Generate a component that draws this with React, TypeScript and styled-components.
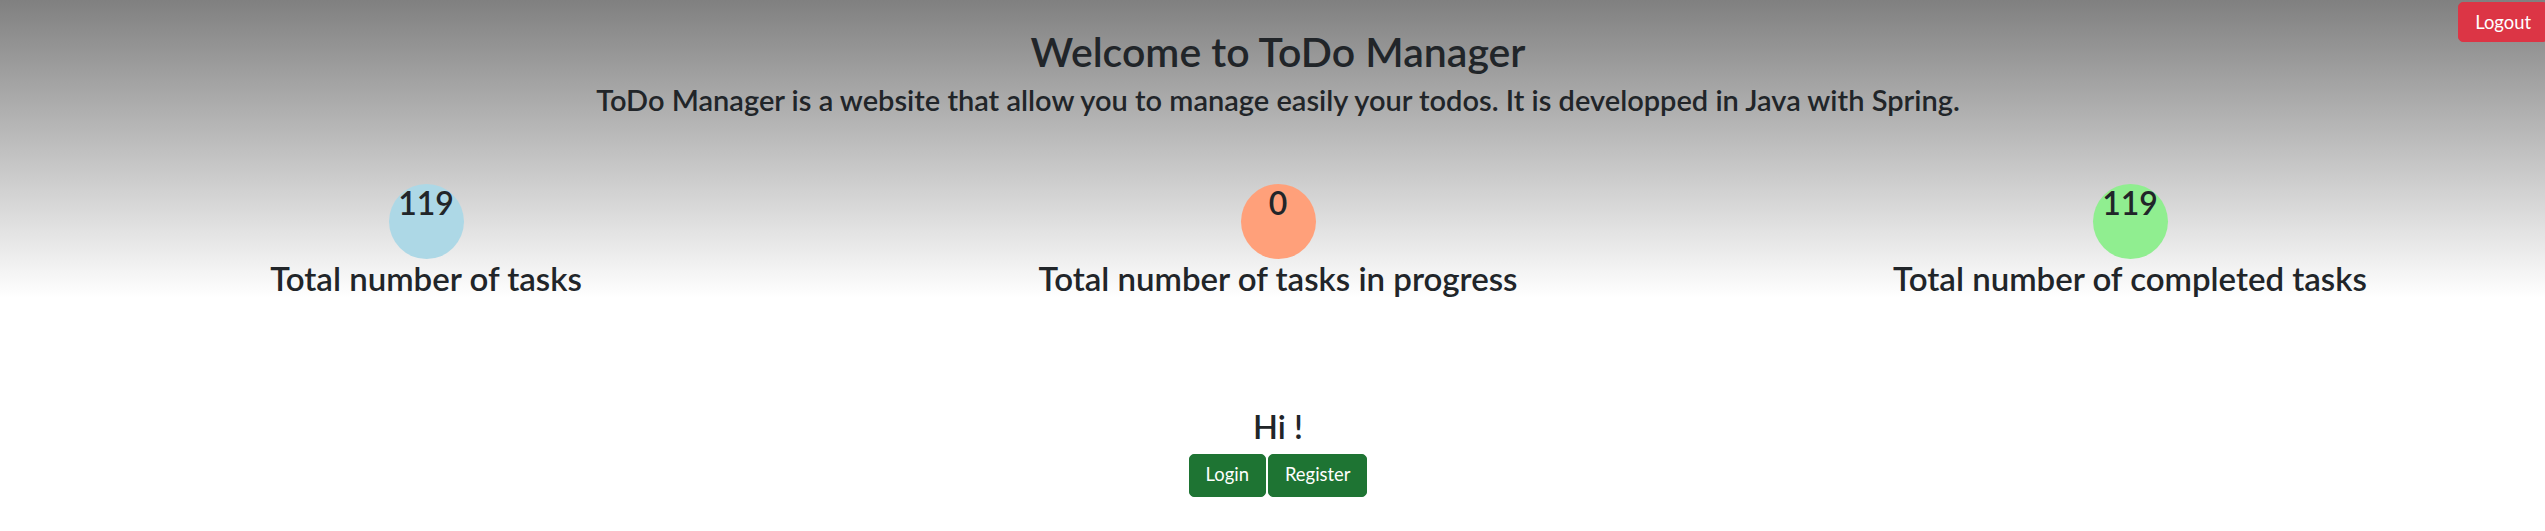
import React from "react";
import styled, { createGlobalStyle } from "styled-components";

const GlobalStyle = createGlobalStyle`
  html, body {
    margin: 0;
    padding: 0;
    overflow-x: hidden;
    background: #ffffff;
  }
  body {
    font-family: Lato, "Liberation Sans", sans-serif;
    color: #212529;
  }
`;

const Page = styled.div`
  position: relative;
  width: 2556px;
`;

const Hero = styled.header`
  background: linear-gradient(to bottom, #808080 0%, #ffffff 100%);
  padding-top: 27px;
  text-align: center;
`;

const Title = styled.h1`
  margin: 0;
  font-size: 41px;
  line-height: 1.2;
  font-weight: 600;
`;

const Subtitle = styled.h3`
  margin: 7px 0 0;
  font-size: 29px;
  line-height: 1.2;
  font-weight: 600;
`;

const LogoutButton = styled.button`
  position: absolute;
  top: 2px;
  right: 8px;
  height: 40px;
  padding: 0 16px;
  border: 1px solid #dc3545;
  border-radius: 5px;
  background: #dc3545;
  color: #ffffff;
  font-family: inherit;
  font-size: 18.4px;
  cursor: pointer;
`;

const StatsRow = styled.section`
  display: grid;
  grid-template-columns: repeat(3, 1fr);
  margin-top: 66px;
`;

const Stat = styled.div`
  display: flex;
  flex-direction: column;
  align-items: center;
`;

const Bubble = styled.div<{ $color: string }>`
  width: 75px;
  height: 75px;
  border-radius: 50%;
  background: ${(p) => p.$color};
  font-size: 32px;
  line-height: 1.2;
  font-weight: 600;
  text-align: center;
`;

const StatLabel = styled.h2`
  margin: 0;
  font-size: 33px;
  line-height: 1.17;
  font-weight: 600;
  white-space: nowrap;
`;

const Greeting = styled.section`
  padding-top: 109px;
  display: flex;
  flex-direction: column;
  align-items: center;
`;

const Hi = styled.h3`
  margin: 0;
  font-size: 32.5px;
  line-height: 1.2;
  font-weight: 600;
`;

const ButtonRow = styled.div`
  display: flex;
  gap: 2px;
  margin-top: 8px;
`;

const GreenButton = styled.button`
  padding: 6.9px 16px;
  border: 1px solid #1e7433;
  border-radius: 5px;
  background: #1e7433;
  color: #ffffff;
  font-family: inherit;
  font-size: 18.4px;
  line-height: 1.5;
  cursor: pointer;
`;

const stats = [
  { value: 119, label: "Total number of tasks", color: "#add8e6" },
  { value: 0, label: "Total number of tasks in progress", color: "#ffa07a" },
  { value: 119, label: "Total number of completed tasks", color: "#90ee90" },
];

export default function App() {
  return (
    <>
      <GlobalStyle />
      <Page>
        <Hero>
          <LogoutButton>Logout</LogoutButton>
          <Title>Welcome to ToDo Manager</Title>
          <Subtitle>
            ToDo Manager is a website that allow you to manage easily your todos. It is developped in Java with Spring.
          </Subtitle>
          <StatsRow>
            {stats.map((s) => (
              <Stat key={s.label}>
                <Bubble $color={s.color}>{s.value}</Bubble>
                <StatLabel>{s.label}</StatLabel>
              </Stat>
            ))}
          </StatsRow>
        </Hero>
        <Greeting>
          <Hi>Hi !</Hi>
          <ButtonRow>
            <GreenButton>Login</GreenButton>
            <GreenButton>Register</GreenButton>
          </ButtonRow>
        </Greeting>
      </Page>
    </>
  );
}
